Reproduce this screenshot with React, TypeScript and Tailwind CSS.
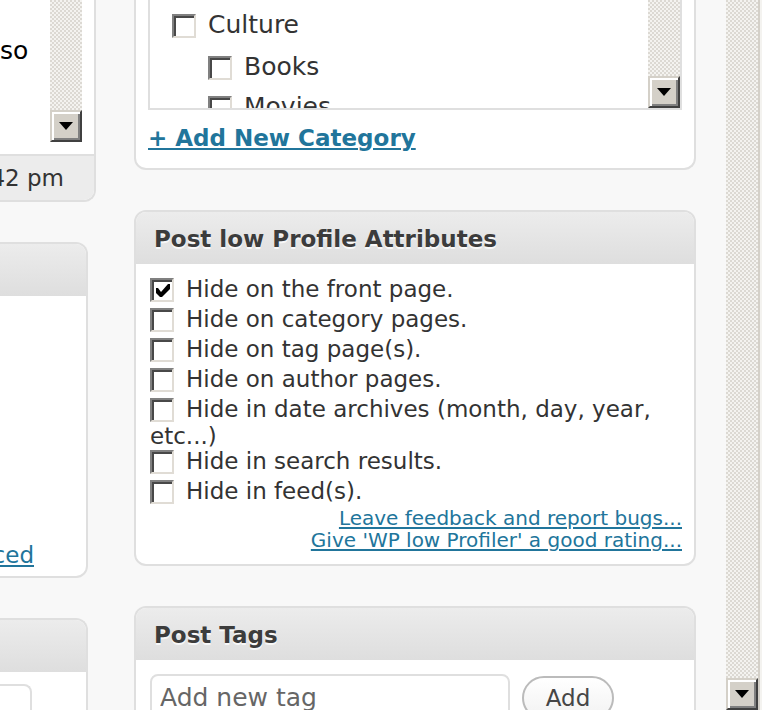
import type { ReactNode } from "react";

const track =
  "bg-[repeating-conic-gradient(#f4f3f0_0_25%,#dcd9d3_0_50%)] bg-[length:4px_4px]";

function ScrollDown({ label }: { label: string }) {
  return (
    <button
      type="button"
      aria-label={label}
      className="flex size-8 shrink-0 items-center justify-center border-2 border-t-[#d4d0c8] border-r-[#404040] border-b-[#404040] border-l-[#d4d0c8] bg-[#d4d0c8] shadow-[inset_2px_2px_#ffffff,inset_-2px_-2px_#808080]"
    >
      <svg width="14" height="8" viewBox="0 0 14 8" aria-hidden="true">
        <path d="M0 0H14L7 8Z" fill="#000" />
      </svg>
    </button>
  );
}

function ScrollBar({ label }: { label: string }) {
  return (
    <div className={`flex w-8 shrink-0 flex-col ${track}`}>
      <div className="flex-1" />
      <ScrollDown label={label} />
    </div>
  );
}

function Check({ id, checked = false }: { id: string; checked?: boolean }) {
  return (
    <span className="my-[3px] mr-3 inline-grid align-[-5px]">
      <input
        id={id}
        type="checkbox"
        defaultChecked={checked}
        className="peer col-start-1 row-start-1 size-6 appearance-none border-2 border-t-[#808080] border-r-[#e0dcd5] border-b-[#e0dcd5] border-l-[#808080] bg-white shadow-[inset_2px_2px_#484848]"
      />
      <svg
        viewBox="0 0 24 24"
        aria-hidden="true"
        className="pointer-events-none invisible col-start-1 row-start-1 size-6 peer-checked:visible"
      >
        <path d="M6 10H8L11 14L18 6H20V11L12 19H10L6 15Z" fill="#000" />
      </svg>
    </span>
  );
}

function Option({ id, checked, children }: { id: string; checked?: boolean; children: ReactNode }) {
  return (
    <label htmlFor={id} className="block">
      <Check id={id} checked={checked} />
      {children}
    </label>
  );
}

function Heading({ children }: { children?: ReactNode }) {
  return (
    <h2 className="flex h-[52px] items-center bg-linear-to-b from-[#ececec] to-[#dedede] px-[18px] pt-[2px] text-[23px] leading-7 font-bold text-[#3c3c3c] [text-shadow:0_2px_#f8f8f8]">
      {children}
    </h2>
  );
}

const options = [
  { id: "front", text: "Hide on the front page.", checked: true },
  { id: "category", text: "Hide on category pages." },
  { id: "tag", text: "Hide on tag page(s)." },
  { id: "author", text: "Hide on author pages." },
  { id: "date", text: "Hide in date archives (month, day, year, etc...)" },
  { id: "search", text: "Hide in search results." },
  { id: "feed", text: "Hide in feed(s)." },
];

const link = "text-[#21759b] underline decoration-2 underline-offset-2";

export default function App() {
  return (
    <div className="flex h-screen overflow-hidden bg-[#f8f8f8] font-['DejaVu_Sans',Verdana,sans-serif] text-[23px] leading-[22px] text-[#333333]">
      <div className="flex w-24 shrink-0 flex-col gap-10">
        <section className="shrink-0 overflow-hidden rounded-br-xl border-r-2 border-b-2 border-[#dfdfdf] bg-white">
          <div className="flex h-[142px] pr-3">
            <p className="flex flex-1 justify-end pt-10 pr-[22px] text-[25px] text-black">so</p>
            <ScrollBar label="Scroll editor down" />
          </div>
          <div className="mt-3 flex h-[46px] items-center justify-end border-t-2 border-[#dfdfdf] bg-[#ececec] pr-[30px] whitespace-nowrap">
            42 pm
          </div>
        </section>
        <section className="mr-2 flex h-[336px] shrink-0 flex-col overflow-hidden rounded-r-xl border-2 border-l-0 border-[#dfdfdf] bg-white">
          <Heading />
          <div className="mt-auto flex justify-end pr-[52px] pb-[10px]">
            <a href="#advanced" className={link}>
              ced
            </a>
          </div>
        </section>
        <section className="mr-2 h-40 shrink-0 overflow-hidden rounded-tr-xl border-t-2 border-r-2 border-[#dfdfdf] bg-white">
          <Heading />
          <div className="mt-3 mr-[54px] h-20 rounded-tr-lg border-t-2 border-r-2 border-[#dfdfdf]" />
        </section>
      </div>

      <main className="ml-[38px] flex min-w-0 flex-1 flex-col gap-10">
        <section className="shrink-0 rounded-b-xl border-2 border-t-0 border-[#dfdfdf] bg-white px-3 pb-[19px]">
          <div className="flex h-[110px] overflow-hidden border-2 border-t-0 border-[#dfdfdf]">
            <div className="min-w-0 flex-1 pt-[11px] pl-[22px] text-[25px]">
              <div className="h-[42px]">
                <Option id="culture">Culture</Option>
              </div>
              <div className="h-10 pl-9">
                <Option id="books">Books</Option>
              </div>
              <div className="h-10 pl-9">
                <Option id="movies">Movies</Option>
              </div>
            </div>
            <ScrollBar label="Scroll categories down" />
          </div>
          <a href="#add-category" className={`mt-[17px] block w-fit font-bold ${link}`}>
            + Add New Category
          </a>
        </section>

        <section className="shrink-0 overflow-hidden rounded-xl border-2 border-[#dfdfdf] bg-white">
          <Heading>Post low Profile Attributes</Heading>
          <div className="pt-[11px] pr-3 pb-[13px] pl-[14px]">
            {options.map((o) => (
              <Option key={o.id} id={o.id} checked={o.checked}>
                {o.text}
              </Option>
            ))}
            <div className="flex flex-col items-end text-xl leading-[22px]">
              <a href="#feedback" className={link}>
                Leave feedback and report bugs...
              </a>
              <a href="#rating" className={link}>
                Give 'WP low Profiler' a good rating...
              </a>
            </div>
          </div>
        </section>

        <section className="flex-1 rounded-t-xl border-2 border-b-0 border-[#dfdfdf] bg-white">
          <div className="overflow-hidden rounded-t-[10px]">
            <Heading>Post Tags</Heading>
          </div>
          <div className="flex gap-3 px-[14px] pt-[14px]">
            <input
              type="text"
              aria-label="Add new tag"
              placeholder="Add new tag"
              className="h-[46px] w-[360px] rounded-lg border-2 border-[#dfdfdf] px-2 text-[25px] placeholder:text-[#666666]"
            />
            <button
              type="button"
              className="mt-[2px] h-11 w-[92px] rounded-full border-2 border-[#bbbbbb] bg-linear-to-b from-white to-[#f2f2f2] text-[#464646]"
            >
              Add
            </button>
          </div>
        </section>
      </main>

      <div className="ml-[30px] flex shrink-0 border-r-2 border-[#f4f3f0]">
        <ScrollBar label="Scroll page down" />
        <div className="w-[2px] bg-[#d4d0c8]" />
      </div>
    </div>
  );
}
